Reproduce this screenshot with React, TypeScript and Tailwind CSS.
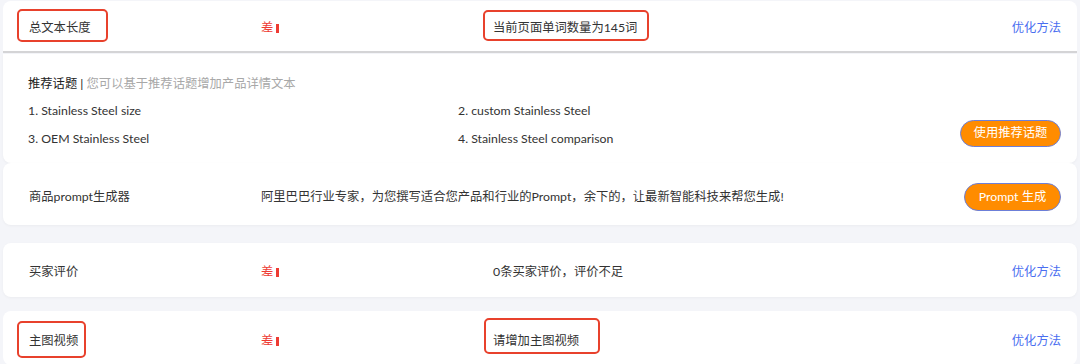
import type { ReactNode } from "react";

const font = "font-['Lato','Noto_Sans_CJK_SC',sans-serif]";

// 红色标注框，覆盖在文字外圈
const Marked = ({ children, box }: { children: ReactNode; box: string }) => (
  <span className="relative inline-block">
    {children}
    <span className={`pointer-events-none absolute rounded-[5px] border-2 border-[#e8412c] ${box}`} />
  </span>
);

const Rating = () => (
  <span className="flex items-center gap-[3px] text-[#ee3b33]">
    差<span className="inline-block h-[9px] w-[3px] bg-[#ee3b33]" />
  </span>
);

interface RowProps {
  label: ReactNode;
  detail: ReactNode;
  className?: string;
}

const ScoreRow = ({ label, detail, className = "" }: RowProps) => (
  <div className={`flex items-center rounded-lg bg-white pl-[26px] pr-[16px] ${className}`}>
    <div className="w-[232px]">{label}</div>
    <div className="w-[232px]">
      <Rating />
    </div>
    <div className="flex-1">{detail}</div>
    <a className="text-[#4a6ef0]">优化方法</a>
  </div>
);

const topics = [
  "1. Stainless Steel size",
  "2. custom Stainless Steel",
  "3. OEM Stainless Steel",
  "4. Stainless Steel comparison",
];

export default function App() {
  return (
    <div className={`h-[364px] w-[1080px] overflow-hidden bg-[#f4f5f9] px-[3px] pt-px text-[12.3px] text-[#333] ${font}`}>
      <ScoreRow
        className="h-[52px] rounded-b-none border-b-2 border-[#d4d4d6] pt-[4px]"
        label={<Marked box="-left-[12px] -right-[17px] -top-[10px] -bottom-[5px]">总文本长度</Marked>}
        detail={<Marked box="-left-[10px] -right-[12px] -top-[9px] -bottom-[4px]">当前页面单词数量为145词</Marked>}
      />

      {/* 推荐话题 */}
      <div className="mt-[1px] flex h-[109px] rounded-b-lg bg-white pl-[25px] pr-[16px] pt-[21px] shadow-[0_1px_3px_rgba(0,0,0,0.04)]">
        <div className="flex-1">
          <div className="mb-[9px]">
            <span className="text-[#222]">推荐话题 |</span>
            <span className="text-[#a8a8a8]"> 您可以基于推荐话题增加产品详情文本</span>
          </div>
          <div className="grid grid-cols-[430px_1fr] gap-y-[9px]">
            {topics.map((t) => (
              <div key={t}>{t}</div>
            ))}
          </div>
        </div>
        <div className="flex items-end pb-[16px]">
          <button className="h-[27px] w-[101px] rounded-full border border-[#6c7fd8] bg-[#ff8c00] text-[12.3px] text-white">
            使用推荐话题
          </button>
        </div>
      </div>

      {/* prompt 生成器 */}
      <div className="flex h-[62px] items-center rounded-lg bg-white pl-[26px] pr-[16px] pt-[6px] shadow-[0_1px_3px_rgba(0,0,0,0.04)]">
        <div className="w-[232px]">商品prompt生成器</div>
        <div className="flex-1">阿里巴巴行业专家，为您撰写适合您产品和行业的Prompt，余下的，让最新智能科技来帮您生成!</div>
        <button className="h-[28px] w-[97px] rounded-full border border-[#6c7fd8] bg-[#ff8c00] text-[12.3px] text-white">
          Prompt 生成
        </button>
      </div>

      <ScoreRow className="mt-[18px] h-[54px] pt-[5px] shadow-[0_1px_3px_rgba(0,0,0,0.04)]" label="买家评价" detail="0条买家评价，评价不足" />

      <ScoreRow
        className="mt-[14px] h-[54px] pt-[6px]"
        label={<Marked box="-left-[12px] -right-[8px] -top-[11px] -bottom-[8px]">主图视频</Marked>}
        detail={<Marked box="-left-[9px] -right-[21px] -top-[14px] -bottom-[4px]">请增加主图视频</Marked>}
      />
    </div>
  );
}
